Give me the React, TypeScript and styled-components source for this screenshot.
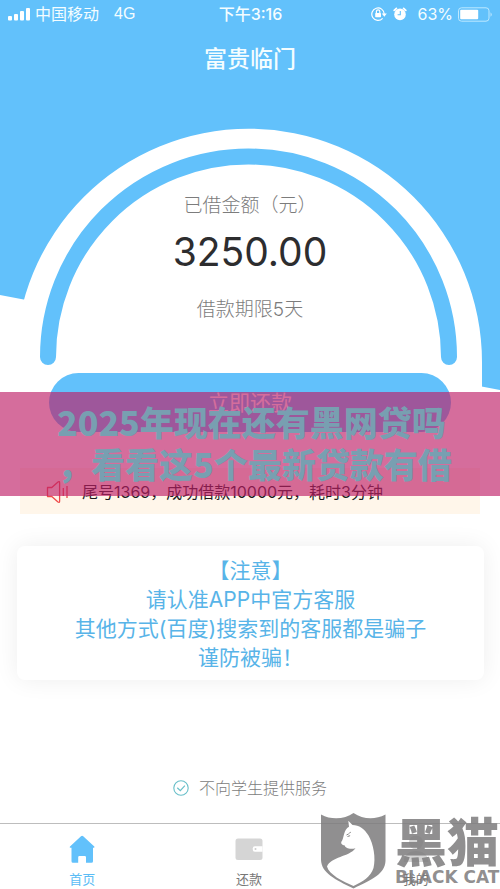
import React from "react";
import styled, { createGlobalStyle } from "styled-components";

const SKY = "#62c1fb";

const GlobalStyle = createGlobalStyle`
  * { box-sizing: border-box; }
  body {
    margin: 0;
    background: #fff;
    font-family: Inter, "Noto Sans CJK SC", sans-serif;
  }
  button { border: 0; background: none; padding: 0; margin: 0; font: inherit; cursor: pointer; }
`;

const Page = styled.div`
  position: relative;
  display: flex;
  flex-direction: column;
  min-height: 100vh;
  overflow: hidden;
  background: #fff;
`;

const Sky = styled.div`
  position: absolute;
  top: 0;
  left: 0;
  width: 100%;
  height: 390px;
  background: ${SKY};
  clip-path: polygon(0 0, 100% 0, 100% 100%, 0 295px);
`;

const Gauge = styled.svg`
  position: absolute;
  top: 0;
  left: 0;
  width: 100%;
  height: auto;
`;

const StatusBar = styled.header`
  position: relative;
  display: grid;
  grid-template-columns: 1fr auto 1fr;
  align-items: center;
  height: 28px;
  padding: 0 7px 0 8px;
  color: #f4fdff;
  font-size: 16px;
  line-height: 20px;
`;

const StatusGroup = styled.div<{ $end?: boolean }>`
  display: flex;
  align-items: center;
  justify-content: ${(p) => (p.$end ? "flex-end" : "flex-start")};
  gap: 5px;
`;

const Carrier = styled.span`
  margin-right: 10px;
`;

const Network = styled.span`
  font-family: "Liberation Sans", sans-serif;
`;

const Clock = styled.time`
  font-weight: 500;
`;

const Percent = styled.span`
  margin-left: 4px;
`;

const Title = styled.h1`
  position: relative;
  margin: 0;
  padding: 14px 0;
  text-align: center;
  color: #f4fdff;
  font-size: 23px;
  line-height: 34px;
  font-weight: 500;
`;

const Summary = styled.section`
  position: relative;
  display: flex;
  flex-direction: column;
  align-items: center;
  padding: 102px 49px 0;
`;

const Label = styled.p`
  margin: 0;
  font-size: 19px;
  line-height: 28px;
  font-weight: 300;
  color: #7c7c7c;
`;

const Amount = styled.strong`
  margin: 8px 0 20px;
  font-size: 39px;
  line-height: 48px;
  font-weight: 400;
  color: #2d2d2f;
`;

const RepayButton = styled.button`
  && {
    width: 100%;
    height: 59px;
    margin-top: 49px;
    padding-bottom: 4px;
    border-radius: 30px;
    background: ${SKY};
    color: #fff;
    font-size: 21px;
    font-weight: 400;
  }
`;

const Notice = styled.div`
  display: flex;
  align-items: center;
  gap: 12px;
  height: 46px;
  margin: 36px 20px 0;
  padding: 2px 26px 0;
  background: #fff6ea;
  color: #1c1a1c;
  font-size: 16px;
  line-height: 24px;
`;

const Warning = styled.section`
  margin: 32px 16px 0 17px;
  padding: 10px 0 8px;
  border-radius: 8px;
  background: #fff;
  box-shadow: 0 0 24px rgba(0, 0, 0, 0.07);
  text-align: center;
  color: #58b4e8;
  font-size: 21px;
  line-height: 29px;
`;

const WarningLine = styled.p`
  margin: 0;
`;

const Pledge = styled.p`
  display: flex;
  align-items: center;
  justify-content: center;
  gap: 10px;
  margin: auto 0 23px;
  color: #7c7c7c;
  font-size: 16px;
  line-height: 24px;
  font-weight: 300;
`;

const TabBar = styled.nav`
  display: grid;
  grid-template-columns: repeat(3, 1fr);
  height: 66px;
  border-top: 1px solid #bdbdbd;
  background: #fff;
`;

const Tab = styled.button<{ $active?: boolean }>`
  && {
    display: flex;
    flex-direction: column;
    align-items: center;
    gap: 6px;
    padding: 10px 2px 0 0;
    color: ${(p) => (p.$active ? "#5bbcf5" : "#777")};
    font-size: 13px;
    line-height: 18px;
  }
`;

const Headline = styled.div`
  position: absolute;
  top: 392px;
  left: 0;
  right: 0;
  height: 104px;
  padding: 9px 48px 0 57px;
  overflow: hidden;
  background: rgba(190, 31, 103, 0.65);
  color: #789fb1;
  font-family: "Noto Sans CJK SC", sans-serif;
  font-size: 34px;
  line-height: 42px;
  font-weight: 900;
  white-space: nowrap;
`;

const Watermark = styled.div`
  position: absolute;
  right: 0;
  bottom: 0;
  display: flex;
  height: 77px;
  gap: 9px;
  color: rgba(125, 123, 124, 0.85);
  pointer-events: none;
`;

const Brand = styled.div`
  display: flex;
  flex-direction: column;
  width: 105px;
  white-space: nowrap;
`;

const BrandName = styled.span`
  font-family: "Noto Sans CJK SC", sans-serif;
  font-size: 52px;
  line-height: 56px;
  font-weight: 900;
`;

const BrandLatin = styled.span`
  font-family: "DejaVu Sans", sans-serif;
  font-size: 17px;
  line-height: 18px;
  font-weight: 700;
`;

const SignalIcon = () => (
  <svg width="22" height="14" viewBox="0 0 22 14" fill="#fff" aria-hidden="true">
    <rect x="0" y="9" width="4" height="4.5" rx="1" />
    <rect x="6" y="7" width="4" height="6.5" rx="1" />
    <rect x="12" y="4" width="4" height="9.5" rx="1" />
    <rect x="18" y="1" width="4" height="12.5" rx="1" />
  </svg>
);

const LockIcon = () => (
  <svg width="16" height="16" viewBox="0 0 16 16" fill="none" aria-hidden="true">
    <path d="M11.6 12.3A6.2 6.2 0 1 1 13.2 8" stroke="#fff" strokeWidth="1.2" />
    <path d="M10.8 7.5h5L13.3 10.8z" fill="#fff" />
    <rect x="4.2" y="7" width="5.8" height="4.2" rx=".6" fill="#fff" />
    <path d="M5.4 7V5.6a1.7 1.7 0 0 1 3.4 0V7" stroke="#fff" strokeWidth="1.2" />
  </svg>
);

const AlarmIcon = () => (
  <svg width="16" height="16" viewBox="0 0 16 16" fill="none" aria-hidden="true">
    <circle cx="8" cy="8.4" r="5.8" fill="#fff" />
    <path d="M2.2 4.4 4.4 2.4M13.8 4.4l-2.200-2" stroke="#fff" strokeWidth="1.800" strokeLinecap="round" />
    <path d="M8.300 5v3.700H5.600" stroke={SKY} strokeWidth="1.100" />
  </svg>
);

const BatteryIcon = () => (
  <svg width="35" height="15" viewBox="0 0 35 15" aria-hidden="true">
    <rect x=".5" y=".8" width="30.5" height="13.4" rx="3" fill="none" stroke="#bde8ff" />
    <rect x="2.2" y="2.7" width="18" height="9.6" rx="1" fill="#fff" />
    <path d="M32.6 5.2q2 2.3 0 4.6z" fill="#d2f0ff" />
  </svg>
);

const SpeakerIcon = () => (
  <svg width="24" height="24" viewBox="0 0 24 24" fill="none" stroke="#ef4a4a" strokeWidth="1.3" aria-hidden="true">
    <path d="M1.5 7.5h4.3L12 2c1-.7 1.6-.4 1.6.8v18.4c0 1.2-.6 1.5-1.6.8L5.8 16.5H1.5z" strokeLinejoin="round" />
    <path d="M17.3 8v8M21 6v12" />
  </svg>
);

const CheckIcon = () => (
  <svg width="16" height="16" viewBox="0 0 16 16" fill="none" stroke="#68bfc9" aria-hidden="true">
    <circle cx="8" cy="8" r="7.2" strokeWidth="1.1" />
    <path d="m4.3 7.7 3 2.9 4.6-5" strokeWidth="1.2" />
  </svg>
);

const HomeIcon = () => (
  <svg width="28" height="30" viewBox="0 0 28 30" fill={SKY} aria-hidden="true">
    <path d="M13 2.300q1.100-.9 2.200 0L26.300 12.500q.8 1-.5 1.300H25v13.400q0 1.500-1.500 1.500H18v-5.500q0-1.200-1.200-1.200h-5.400q-1.200 0-1.200 1.200v5.500H5q-1.500 0-1.500-1.500V13.800H2.400q-1.400-.2-.4-1.300z" />
  </svg>
);

const WalletIcon = () => (
  <svg width="28" height="30" viewBox="0 0 28 30" aria-hidden="true">
    <rect x=".5" y="4.5" width="27" height="21.5" rx="2.5" fill="#d5d5d5" />
    <path d="M27.500 12.200h-7.700q-2 0-2 2v1.600q0 2 2 2h7.700z" fill="#fff" />
    <circle cx="20.5" cy="15" r="1" fill="#ccc" />
  </svg>
);

const PersonIcon = () => (
  <svg width="28" height="30" viewBox="0 0 28 30" fill="#d5d5d5" aria-hidden="true">
    <circle cx="14" cy="8.5" r="7" />
    <path d="M1.5 28C2 20.5 7 17 14 17s12 3.5 12.5 11z" />
  </svg>
);

const CatShield = () => (
  <svg width="66" height="77" viewBox="0 0 66 77" aria-hidden="true">
    <path
      d="M1 2.5C12 8.5 25 7 33.5 1 43 7.5 55 8 65.5 2.5V49C65 62 52 67.5 33.5 76.5 15 67.5 1.5 61 1 48z"
      fill="rgba(125,123,124,.85)"
    />
    <path
      d="M28.3 8.7 32.5 13C39 13 44.5 17 48.5 23.5 53.5 32 56 46 53.5 56 50.5 65 43 69.5 33.5 74 22 69 9 62.5 7 54.5 11 44.500 29 45 35.500 36.200 30 37.800 25 36 24.800 33.500 22 33 20.500 31.500 21.500 29.500 24 27 23.500 17 29 14.800z"
      fill="#fff"
    />
    <path d="m26.5 23 2.3-1.2M29.2 21.2l1.6-1M27.5 24.5l2.6-.8" stroke="#858585" strokeWidth="1" />
  </svg>
);

const WARNING_LINES = ["【注意】", "请认准APP中官方客服", "其他方式(百度)搜索到的客服都是骗子", "谨防被骗！"];

export default function App() {
  return (
    <>
      <GlobalStyle />
      <Page>
        <Sky />
        <Gauge viewBox="0 0 500 400" aria-hidden="true">
          <path d="M15.500 400V362a233 233 0 0 1 466.500 0v38z" fill="#fff" />
          <path d="M48 357a200.500 200.500 0 0 1 401 0" fill="none" stroke={SKY} strokeWidth="16" strokeLinecap="round" />
        </Gauge>
        <StatusBar>
          <StatusGroup>
            <SignalIcon />
            <Carrier>中国移动</Carrier>
            <Network>4G</Network>
          </StatusGroup>
          <Clock>下午3:16</Clock>
          <StatusGroup $end>
            <LockIcon />
            <AlarmIcon />
            <Percent>63%</Percent>
            <BatteryIcon />
          </StatusGroup>
        </StatusBar>
        <Title>富贵临门</Title>
        <Summary>
          <Label>已借金额（元）</Label>
          <Amount>3250.00</Amount>
          <Label>借款期限5天</Label>
          <RepayButton type="button">立即还款</RepayButton>
        </Summary>
        <Notice>
          <SpeakerIcon />
          <span>尾号1369，成功借款10000元，耗时3分钟</span>
        </Notice>
        <Warning>
          {WARNING_LINES.map((line) => (
            <WarningLine key={line}>{line}</WarningLine>
          ))}
        </Warning>
        <Pledge>
          <CheckIcon />
          不向学生提供服务
        </Pledge>
        <TabBar>
          <Tab type="button" $active>
            <HomeIcon />
            首页
          </Tab>
          <Tab type="button">
            <WalletIcon />
            还款
          </Tab>
          <Tab type="button">
            <PersonIcon />
            我的
          </Tab>
        </TabBar>
        <Headline>
          2025年现在还有黑网贷吗
          <br />
          ，看看这5个最新贷款有借
        </Headline>
        <Watermark>
          <CatShield />
          <Brand>
            <BrandName>黑猫</BrandName>
            <BrandLatin>BLACK CAT</BrandLatin>
          </Brand>
        </Watermark>
      </Page>
    </>
  );
}
